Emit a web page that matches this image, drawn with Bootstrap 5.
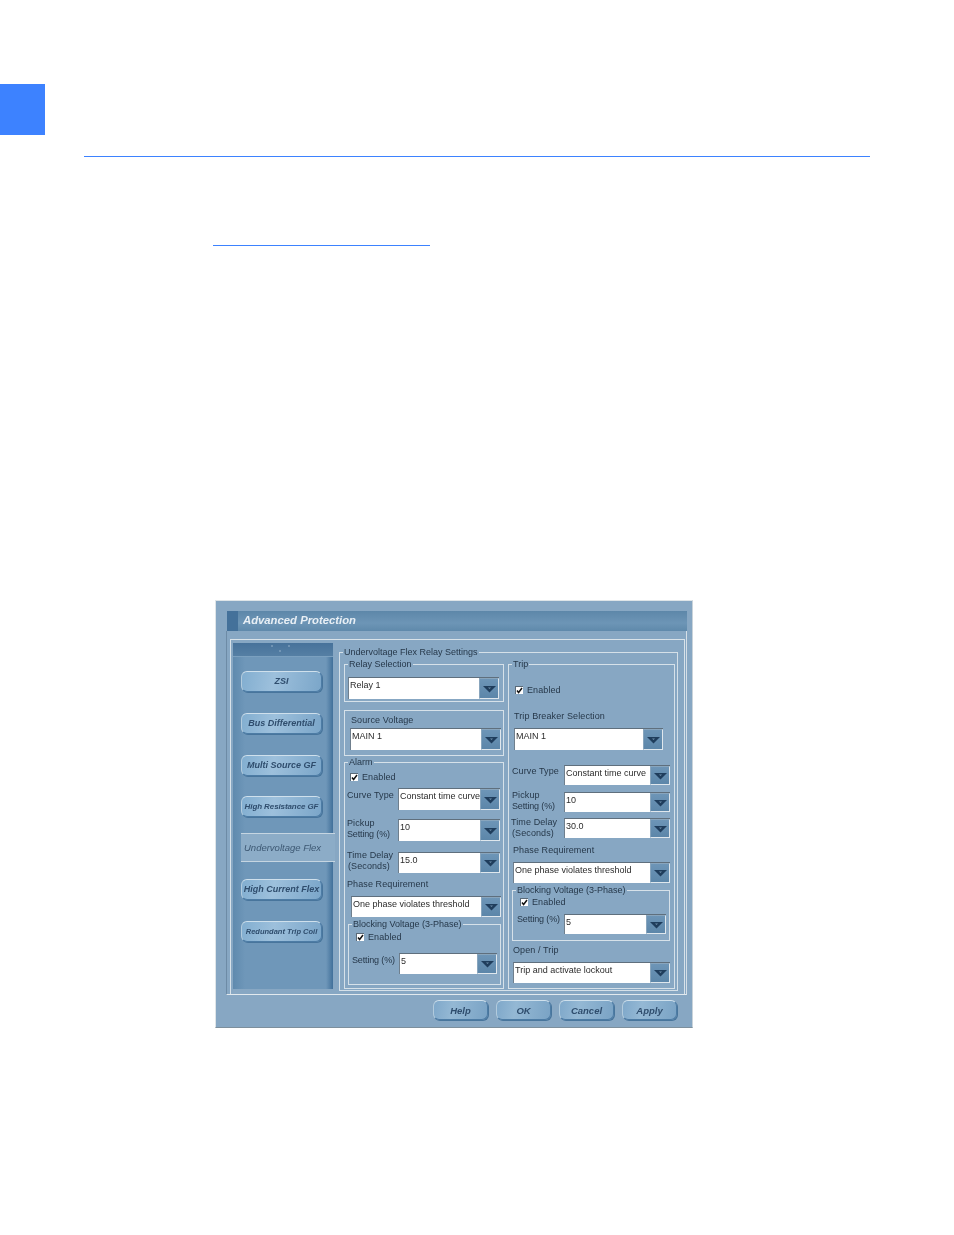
<!DOCTYPE html>
<html lang="en">
<head>
<meta charset="utf-8">
<title>Advanced Protection</title>
<link href="https://cdn.jsdelivr.net/npm/bootstrap@5.3.0/dist/css/bootstrap.min.css" rel="stylesheet">
<style>
html,body{margin:0;background:#fff;overflow:hidden}
*{box-sizing:border-box}
.tabmark{width:45px;height:51px;margin-top:84px;background:#3d82ff}
.toprule{height:1px;width:786px;margin:21px 0 0 84px;background:#3d82ff}
.linkrule{height:1px;width:217px;margin:88px 0 0 213px;background:#3d82ff}
.dlg{width:478px;height:428px;margin:354px 0 0 215px;position:relative;background:#87a7c3;padding:10px 6px 0 11px;
 border:1px solid #dfe5e8;border-bottom-color:#7d8f9c;border-right-color:#c9d3da;
 font:9px/11px "Liberation Sans",Arial,sans-serif;color:#26384a;filter:blur(.3px);letter-spacing:.1px}
.titlebar{height:20px;width:460px;background:linear-gradient(#5d87a9,#6d95b6 60%,#5f89ab);display:flex}
.titlecap{width:11px;background:#44719a}
.titletxt{font:italic 700 11.3px/18px "Liberation Sans",Arial,sans-serif;color:#e8eff5;padding-left:5px;letter-spacing:0}
.outer{width:461px;height:364px;margin-left:-1px;border-left:1px solid #6d8ba6;border-bottom:1px solid #e2e9ee;border-right:1px solid #d5dfe7;padding:8px 2px 0 3px}
.frame{width:455px;height:355px;border:1px solid #d8e2e9;border-bottom:0;padding:3px 0 0 2px}
.side{width:100px;height:346px;background:linear-gradient(90deg,#5f8aae,#6f97b9 12%,#6f97b9 93%,#41709a);position:relative;flex:none}
.sidehead{height:14px;background:linear-gradient(#47729a,#557fa4);border-bottom:1px solid #7ba0bf}
.sidehead svg{display:block;width:100px;height:13px}
.navbtn{display:block;width:81px;height:21px;padding:0;margin:0 0 0 8px;border:1px solid #4d7ca5;border-radius:6px;border-top-color:#cfe0ec;border-left-color:#b2cbdd;
 background:linear-gradient(100deg,#82aed0,#9dc0dc 40%,#7ba6c9);font:italic 700 9px/17px "Liberation Sans",Arial,sans-serif;color:#2f4d6d;box-shadow:1px 1px 0 #48759c;white-space:nowrap;letter-spacing:0}
.navbtn.fs8{font-size:8px;letter-spacing:-.1px}
.navbtn.fs7{font-size:7.5px}
.navcur{width:94px;height:29px;margin:0 0 0 8px;background:#8cacc7;border-top:1px solid #c5d5e1;border-bottom:1px solid #c5d5e1;font:italic 9.500px/27px "Liberation Sans",Arial,sans-serif;color:#3d5873;padding-left:3px;letter-spacing:0}
.settings{width:339px;height:339px;margin:9px 0 0 6px;border:1px solid #d5e0e8;padding:11px 0 0 4px;position:relative}
.grp{position:relative;border:1px solid #d6e1e9}
.cap{position:absolute;left:3px;top:-6px;background:#87a7c3;padding:0 1px;white-space:nowrap;letter-spacing:0}
.gleft{width:160px;flex:none}
.gright{width:167px;margin-left:4px;height:325px;flex:none}
.rel{height:38px}.src{height:46px;margin-top:8px}.alm{height:227px;margin-top:6px}
.blk1{width:153px;height:61px;margin:7px 0 0 3px}
.blk2{width:158px;height:51px;margin:7px 0 0 3px}
.combo{display:flex;height:22px;background:#fff;border-top:1px solid #5f6f7d;border-left:1px solid #6f7f8d;color:#2c2c2c;line-height:11px;letter-spacing:0}
.combotxt{flex:1;padding:2px 0 0 1px;white-space:nowrap;overflow:hidden}
.drop{width:20px;flex:none;background:linear-gradient(#6d95b7,#5c86a9);border:1px solid #88a5bd;border-right-color:#dfe7ed;border-bottom-color:#dfe7ed;display:flex;align-items:center;justify-content:center}
.drop svg{width:13px;height:8px;display:block}
.h21{height:21px}.h20{height:20px}
.w151{width:151px}.w149{width:149px}.w150{width:150px}.w102{width:102px}.w98{width:98px}.w106{width:106px}.w157{width:157px}
.chk{display:flex;align-items:center;height:10px;gap:4px}
.box{width:8px;height:8px;background:#fff;border-top:1px solid #5a6a78;border-left:1px solid #5a6a78;flex:none;display:flex}
.box svg{width:7px;height:7px}
.lbl2,.lbl3,.lbl4,.lbl5{flex:none;white-space:nowrap;height:11px}
.lbl2{width:51px}.lbl3{width:52px}.lbl5{width:53px}.lbl4{width:47px}
.tight{letter-spacing:-.15px}
.ctr{padding-left:1px}
.s1{margin-top:1px}.s2{margin-top:2px}.s4{margin-top:4px}.s6{margin-top:6px}.s7{margin-top:7px}.s9{margin-top:9px}.s11{margin-top:11px}.s12{margin-top:12px}.s14{margin-top:14px}.s15{margin-top:15px}.s16{margin-top:16px}.s17{margin-top:17px}.s20{margin-top:20px}.s21{margin-top:21px}
.n1{margin-top:-1px}.n2{margin-top:-2px}
.i2{margin-left:2px}.i3{margin-left:3px}.i4{margin-left:4px}.i5{margin-left:5px}.i6{margin-left:6px}.i7{margin-left:7px}
.footbar{height:20px;margin-top:5px;gap:8px;padding-right:9px}
.footbtn{width:55px;height:20px;padding:0;border:1px solid #4d7ca5;border-radius:6px;border-top-color:#cfe0ec;border-left-color:#b2cbdd;background:linear-gradient(100deg,#7fa8ca,#94b8d4 35%,#7aa3c5);font:italic 700 9.500px/17px "Liberation Sans",Arial,sans-serif;color:#2f4d6d;box-shadow:1px 1px 0 #48759c}
</style>
</head>
<body>
<svg width="0" height="0" class="d-block position-absolute">
  <symbol id="arrow" viewBox="0 0 13 8"><path d="M0 1h13L6.500 7.500z" fill="#1f3d5c"/><path d="M5 2.500h3L6.500 4z" fill="#6f8fab"/></symbol>
  <symbol id="tick" viewBox="0 0 7 7"><path d="M1 3.500l1.600 2L6 1" fill="none" stroke="#111" stroke-width="1.500"/></symbol>
</svg>

<div class="tabmark"></div>
<div class="toprule"></div>
<div class="linkrule"></div>

<div class="dlg">
  <div class="titlebar"><div class="titlecap"></div><div class="titletxt">Advanced Protection</div></div>
  <div class="outer">
    <div class="frame d-flex">
      <div class="side">
        <div class="sidehead"><svg viewBox="0 0 100 13"><circle cx="39" cy="3" r=".8" fill="#9db9cf"/><circle cx="47" cy="8" r=".8" fill="#9db9cf"/><circle cx="56" cy="3" r=".8" fill="#9db9cf"/></svg></div>
        <button type="button" class="navbtn s14">ZSI</button>
        <button type="button" class="navbtn s21">Bus Differential</button>
        <button type="button" class="navbtn s21">Multi Source GF</button>
        <button type="button" class="navbtn fs8 s20">High Resistance GF</button>
        <div class="navcur s16">Undervoltage Flex</div>
        <button type="button" class="navbtn s17">High Current Flex</button>
        <button type="button" class="navbtn fs7 s21">Redundant Trip Coil</button>
      </div>
      <div class="settings d-flex">
        <div class="cap">Undervoltage Flex Relay Settings</div>
        <div class="gleft">
          <div class="grp rel">
            <div class="cap">Relay Selection</div>
            <div class="combo w151 s12 i3"><div class="combotxt">Relay 1</div><div class="drop"><svg><use href="#arrow"/></svg></div></div>
          </div>
          <div class="grp src">
            <div class="i6 s4">Source Voltage</div>
            <div class="combo w151 s2 i5"><div class="combotxt">MAIN 1</div><div class="drop"><svg><use href="#arrow"/></svg></div></div>
          </div>
          <div class="grp alm">
            <div class="cap">Alarm</div>
            <div class="chk s9 i5"><span class="box"><svg><use href="#tick"/></svg></span><span>Enabled</span></div>
            <div class="d-flex s6 i2"><div class="lbl2 s2">Curve Type</div><div class="combo w102"><div class="combotxt">Constant time curve</div><div class="drop"><svg><use href="#arrow"/></svg></div></div></div>
            <div class="d-flex s9 i2"><div class="lbl2 n1">Pickup<br><span class="tight">Setting (%)</span></div><div class="combo w102"><div class="combotxt">10</div><div class="drop"><svg><use href="#arrow"/></svg></div></div></div>
            <div class="d-flex s11 i2"><div class="lbl2 n2">Time Delay<br><span class="ctr">(Seconds)</span></div><div class="combo w102 h21"><div class="combotxt">15.0</div><div class="drop"><svg><use href="#arrow"/></svg></div></div></div>
            <div class="s6 i2">Phase Requirement</div>
            <div class="combo w150 h21 s6 i6"><div class="combotxt">One phase violates threshold</div><div class="drop"><svg><use href="#arrow"/></svg></div></div>
            <div class="grp blk1">
              <div class="cap">Blocking Voltage (3-Phase)</div>
              <div class="chk s7 i7"><span class="box"><svg><use href="#tick"/></svg></span><span>Enabled</span></div>
              <div class="d-flex s11 i3"><div class="lbl4 s2 tight">Setting (%)</div><div class="combo w98 h21"><div class="combotxt">5</div><div class="drop"><svg><use href="#arrow"/></svg></div></div></div>
            </div>
          </div>
        </div>
        <div class="grp gright">
          <div class="cap">Trip</div>
          <div class="chk s20 i6"><span class="box"><svg><use href="#tick"/></svg></span><span>Enabled</span></div>
          <div class="s16 i5">Trip Breaker Selection</div>
          <div class="combo w149 s6 i5"><div class="combotxt">MAIN 1</div><div class="drop"><svg><use href="#arrow"/></svg></div></div>
          <div class="d-flex s15 i3"><div class="lbl3 s1">Curve Type</div><div class="combo w106 h20"><div class="combotxt">Constant time curve</div><div class="drop"><svg><use href="#arrow"/></svg></div></div></div>
          <div class="d-flex s7 i3"><div class="lbl3 n2">Pickup<br><span class="tight">Setting (%)</span></div><div class="combo w106 h20"><div class="combotxt">10</div><div class="drop"><svg><use href="#arrow"/></svg></div></div></div>
          <div class="d-flex s6 i2"><div class="lbl5 n1">Time Delay<br><span class="ctr">(Seconds)</span></div><div class="combo w106 h20"><div class="combotxt">30.0</div><div class="drop"><svg><use href="#arrow"/></svg></div></div></div>
          <div class="s7 i4">Phase Requirement</div>
          <div class="combo w157 h21 s6 i4"><div class="combotxt">One phase violates threshold</div><div class="drop"><svg><use href="#arrow"/></svg></div></div>
          <div class="grp blk2">
            <div class="cap">Blocking Voltage (3-Phase)</div>
            <div class="chk s6 i7"><span class="box"><svg><use href="#tick"/></svg></span><span>Enabled</span></div>
            <div class="d-flex s7 i4"><div class="lbl4 tight">Setting (%)</div><div class="combo w102 h20"><div class="combotxt">5</div><div class="drop"><svg><use href="#arrow"/></svg></div></div></div>
          </div>
          <div class="s4 i4">Open / Trip</div>
          <div class="combo w157 h21 s6 i4"><div class="combotxt">Trip and activate lockout</div><div class="drop"><svg><use href="#arrow"/></svg></div></div>
        </div>
      </div>
    </div>
  </div>
  <div class="footbar d-flex justify-content-end">
    <button type="button" class="footbtn">Help</button>
    <button type="button" class="footbtn">OK</button>
    <button type="button" class="footbtn">Cancel</button>
    <button type="button" class="footbtn">Apply</button>
  </div>
</div>
<script src="https://cdn.jsdelivr.net/npm/bootstrap@5.3.0/dist/js/bootstrap.bundle.min.js"></script>
</body>
</html>
